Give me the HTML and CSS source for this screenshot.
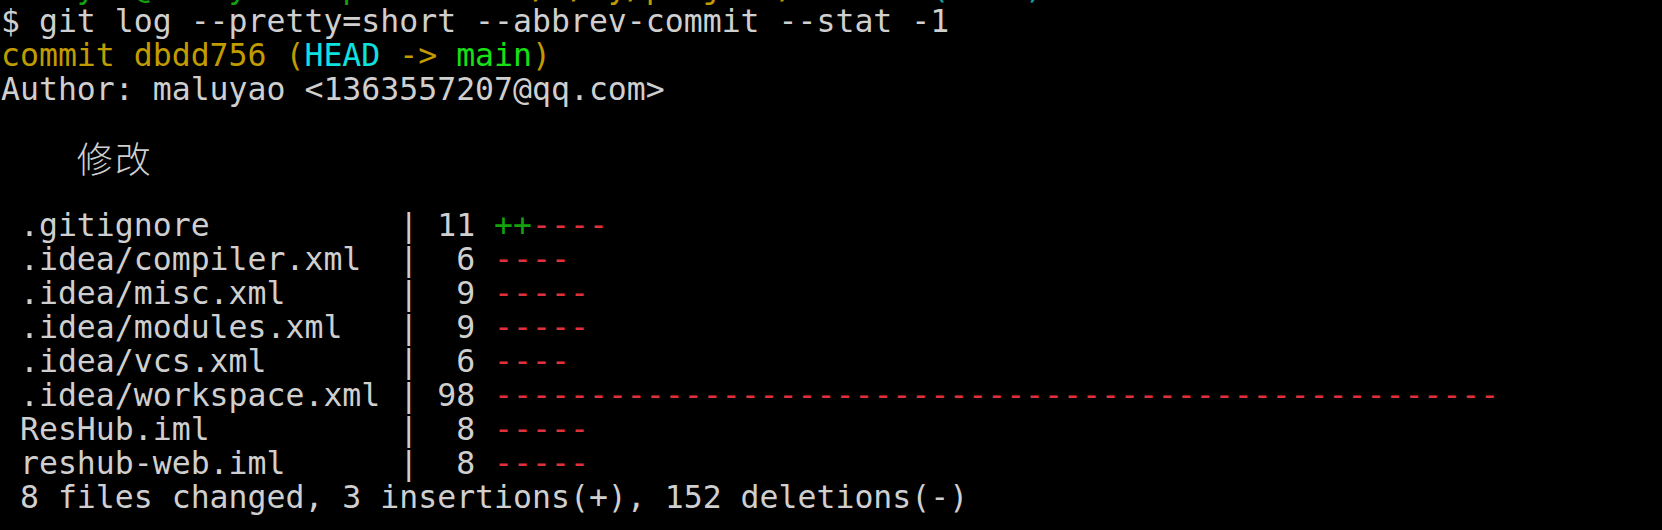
FILE: index.html
```html
<!DOCTYPE html>
<html lang="en">
<head>
<meta charset="utf-8">
<title>git log</title>
<link rel="stylesheet" href="styles.css">
</head>
<body>
<main class="screen">
  <div class="line"><span class="g">maluyao@maluyao-Lap</span> <span class="m">MINGW64</span> <span class="y">/d/My/project/ResHub</span> <span class="c">(main)</span></div>
  <div class="line">$ git log --pretty=short --abbrev-commit --stat -1</div>
  <div class="line"><span class="y">commit dbdd756 (<span class="hc">HEAD</span> -&gt; <span class="hg">main</span>)</span></div>
  <div class="line">Author: maluyao &lt;1363557207@qq.com&gt;</div>
  <div class="line"> </div>
  <div class="line">    <span class="cjk">修改</span></div>
  <div class="line"> </div>
  <div class="line"> .gitignore          | 11 <span class="add">++</span><span class="del">----</span></div>
  <div class="line"> .idea/compiler.xml  |  6 <span class="del">----</span></div>
  <div class="line"> .idea/misc.xml      |  9 <span class="del">-----</span></div>
  <div class="line"> .idea/modules.xml   |  9 <span class="del">-----</span></div>
  <div class="line"> .idea/vcs.xml       |  6 <span class="del">----</span></div>
  <div class="line"> .idea/workspace.xml | 98 <span class="del">-----------------------------------------------------</span></div>
  <div class="line"> ResHub.iml          |  8 <span class="del">-----</span></div>
  <div class="line"> reshub-web.iml      |  8 <span class="del">-----</span></div>
  <div class="line"> 8 files changed, 3 insertions(+), 152 deletions(-)</div>
</main>
</body>
</html>
```

FILE: styles.css
```css
html, body {
  margin: 0;
  padding: 0;
  background: #000;
}

.screen {
  height: 530px;
  box-sizing: border-box;
  padding: 0 0 16px 1px;
  display: flex;
  flex-direction: column;
  justify-content: flex-end;
  overflow: hidden;
  background: #000;
  color: #cfcfcf;
  font-family: "DejaVu Sans Mono", "Liberation Mono", monospace;
  font-size: 31.5px;
}

.line {
  flex: none;
  height: 34px;
  line-height: 34px;
  white-space: pre;
}

.g { color: #13a10e; }
.m { color: #b148c6; }
.y { color: #c19c00; }
.c { color: #17a5a0; }
.hc { color: #0fe0e0; }
.hg { color: #16e016; }
.add { color: #13a10e; }
.del { color: #e0303c; }

.cjk {
  font-family: "Noto Sans CJK SC", sans-serif;
  font-size: 36px;
  font-weight: 300;
  letter-spacing: 2px;
  vertical-align: 1px;
}
```
